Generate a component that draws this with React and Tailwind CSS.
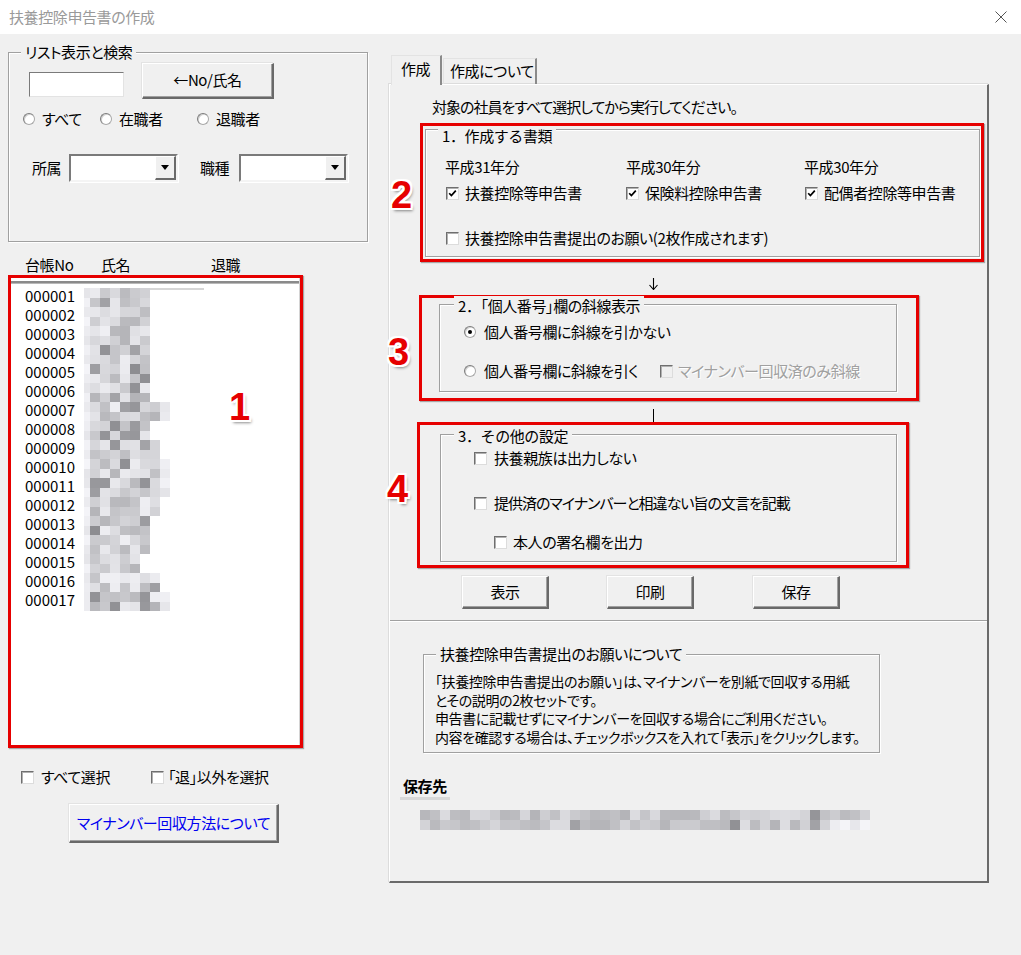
import React from 'react';

const NAME_ENDS = [150, 150, 150, 150, 150, 150, 170, 150, 160, 170, 170, 160, 150, 150, 140, 160, 170];

function rng(seed) {
  let s = seed;
  return () => {
    s = (s * 9301 + 49297) % 233280;
    return s / 233280;
  };
}

function shade(r, light, max = 240) {
  const t = r();
  let v = t < 0.1 ? 140 + Math.floor(r() * 25) : 180 + Math.floor(r() * (max - 180));
  if (light) v = 228 + Math.floor(r() * 18);
  return `rgb(${v},${v},${Math.min(255, v + 4)})`;
}

function NameBlur({ end, seed }) {
  const r = rng(seed);
  const cols = 1 + Math.round((end - 90) / 10);
  return (
    <div className="flex flex-col translate-y-[2px]">
      {[0, 1].map(row => (
        <div key={row} className={`flex ${row === 0 ? 'h-[10px]' : 'h-[9px]'}`}>
          {Array.from({ length: cols }).map((_, c) => (
            <div key={c} className={c === 0 ? 'w-[6px]' : 'w-[10px]'}
              style={{ backgroundColor: shade(r, c === 0 || c >= 8) }} />
          ))}
        </div>
      ))}
    </div>
  );
}

function PathBlur() {
  const r = rng(77);
  return (
    <div className="flex flex-col">
      {[0, 1].map(row => (
        <div key={row} className="flex h-[10px]">
          {Array.from({ length: 45 }).map((_, c) => (
            <div key={c} className="w-[10px]" style={{ backgroundColor: shade(r, row === 1 && c > 40, 222) }} />
          ))}
        </div>
      ))}
    </div>
  );
}

function Check({ checked, disabled }) {
  return (
    <span className={`relative inline-block shrink-0 w-[13px] h-[13px] border border-t-[#6f6f6f] border-l-[#6f6f6f] border-r-[#dcdcdc] border-b-[#dcdcdc] shadow-[inset_1px_1px_0_#b0b0b0] ${disabled ? 'bg-[#f0f0f0]' : 'bg-white'}`}>
      {checked && (
        <svg className="absolute left-[1px] top-[1px]" width="9" height="9" viewBox="0 0 9 9">
          <path d="M1.2 4.2 L3.4 6.6 L7.8 1.6" stroke="#000" strokeWidth="1.7" fill="none" />
        </svg>
      )}
    </span>
  );
}

function Radio({ checked }) {
  return (
    <span className="relative inline-block shrink-0 w-[12px] h-[12px] rounded-full bg-white border border-[#a8a8a8] border-t-[#7c7c7c] border-l-[#7c7c7c] shadow-[inset_1px_1px_0_#d0d0d0]">
      {checked && <span className="absolute left-[3px] top-[3px] w-[4px] h-[4px] rounded-full bg-black" />}
    </span>
  );
}

function WinBtn({ className, children }) {
  return (
    <div className={`flex items-center justify-center bg-[#f0f0f0] border-t border-l border-t-white border-l-white border-r-2 border-b-2 border-r-[#696969] border-b-[#696969] shadow-[-1px_-1px_0_#e3e3e3,inset_-1px_-1px_0_#a0a0a0] ${className}`}>
      {children}
    </div>
  );
}

function Combo() {
  return (
    <div className="flex w-[109px] h-[28px] bg-white border-2 border-t-[#7a7a7a] border-l-[#7a7a7a] border-r-[#f4f4f4] border-b-[#f4f4f4] shadow-[1px_1px_0_#fff]">
      <div className="flex-1" />
      <div className="w-[21px] h-full flex items-center justify-center bg-[#f0f0f0] border-t border-l border-t-white border-l-white border-r-2 border-b-2 border-r-[#6a6a6a] border-b-[#6a6a6a]">
        <svg width="8" height="5" viewBox="0 0 8 5"><path d="M0 0 H8 L4 5 Z" fill="#000" /></svg>
      </div>
    </div>
  );
}

function GroupBox({ label, labelPos, className, children }) {
  return (
    <div className={`relative border border-[#a0a0a0] shadow-[inset_1px_1px_0_#fff,1px_1px_0_#fff] ${className}`}>
      <span className={`absolute px-[4px] bg-[#f0f0f0] leading-[20px] whitespace-nowrap ${labelPos}`}>{label}</span>
      {children}
    </div>
  );
}

function Badge({ n, className }) {
  return (
    <span className={`absolute font-['Liberation_Sans',sans-serif] font-bold text-[38px] leading-none tracking-normal text-[#e60000] [text-shadow:2px_0_0_#fff,-2px_0_0_#fff,0_2px_0_#fff,0_-2px_0_#fff,2px_2px_0_#fff,-2px_-2px_0_#fff,2px_-2px_0_#fff,-2px_2px_0_#fff,2px_3px_3px_rgba(0,0,0,0.45)] ${className}`}>
      {n}
    </span>
  );
}

const redBox = 'relative border-[3px] border-[#e60000] shadow-[1px_1px_1px_rgba(0,0,0,0.3)]';

export default function App() {
  return (
    <div className="w-[1021px] h-[955px] bg-[#f0f0f0] text-black text-[15px] tracking-[-0.4px] font-['Noto_Sans_CJK_JP','Noto_Sans',sans-serif] [font-feature-settings:'palt'] overflow-hidden">
      {/* title bar */}
      <div className="h-[34px] bg-white flex items-center justify-between pl-[9px] pr-[14px]">
        <span className="text-[#9a9a9a] leading-[20px]">扶養控除申告書の作成</span>
        <svg width="12" height="12" viewBox="0 0 12 12">
          <path d="M0.5 0.5 L11.5 11.5 M11.5 0.5 L0.5 11.5" stroke="#555" strokeWidth="1" />
        </svg>
      </div>

      <div className="flex">
        {/* left column */}
        <div className="w-[389px] shrink-0 pl-[8px]">
          <GroupBox label="リスト表示と検索" labelPos="left-[12px] top-[-11px]" className="mt-[18px] w-[360px] h-[190px]">
            <div className="flex items-start pl-[20px]">
              <div className="mt-[19px] w-[95px] h-[25px] bg-white border border-t-[#7a7a7a] border-l-[#7a7a7a] border-r-[#e3e3e3] border-b-[#e3e3e3]" />
              <WinBtn className="mt-[10px] ml-[18px] w-[132px] h-[36px]">←No/氏名</WinBtn>
            </div>
            <div className="flex items-center h-[20px] mt-[10px] pl-[14px]">
              <div className="flex items-center gap-[7px] w-[77px]"><Radio /><span>すべて</span></div>
              <div className="flex items-center gap-[7px] w-[97px]"><Radio /><span>在職者</span></div>
              <div className="flex items-center gap-[7px]"><Radio /><span>退職者</span></div>
            </div>
            <div className="flex items-center mt-[25px] pl-[23px]">
              <span className="w-[37px]">所属</span>
              <Combo />
              <span className="w-[39px] ml-[22px]">職種</span>
              <Combo />
            </div>
          </GroupBox>

          <div className="flex h-[20px] leading-[20px] mt-[13px] pl-[17px]">
            <span className="w-[76px]">台帳No</span>
            <span className="w-[110px]">氏名</span>
            <span>退職</span>
          </div>

          <div className={`${redBox} w-[295px] h-[473px]`}>
            <div className="relative h-full bg-white border-r border-[#d4d4d4] pt-[3px]">
              <div className="h-[3px] border-t-2 border-b border-t-[#8a8a8a] border-b-[#b8b8b8]" />
              <div className="absolute left-[73px] top-[10px] w-[120px] h-[2px] bg-[#d6d6d6]" />
              <div className="pt-[2px]">
                {NAME_ENDS.map((end, i) => (
                  <div key={i} className="flex items-center h-[19px] pl-[14px]">
                    <span className="w-[59px] leading-[19px] tracking-normal">{String(i + 1).padStart(6, '0')}</span>
                    <NameBlur end={end} seed={i * 131 + 17} />
                  </div>
                ))}
              </div>
            </div>
            <Badge n="1" className="left-[218px] top-[110px]" />
          </div>

          <div className="flex items-center h-[20px] mt-[19px] pl-[13px]">
            <div className="flex items-center gap-[7px] w-[130px]"><Check /><span>すべて選択</span></div>
            <div className="flex items-center gap-[4px]"><Check /><span>「退」以外を選択</span></div>
          </div>

          <WinBtn className="mt-[17px] ml-[61px] w-[210px] h-[39px] text-[#0000f0]">マイナンバー回収方法について</WinBtn>
        </div>

        {/* right column */}
        <div className="w-[600px] shrink-0">
          <div className="flex items-end h-[29px] mt-[21px] pl-[2px]">
            <div className="relative z-10 h-[30px] w-[51px] -mb-[1px] flex items-center pb-[2px] pl-[9px] bg-[#f0f0f0] border-t border-l border-t-[#e3e3e3] border-l-[#e3e3e3] border-r-2 border-r-[#8a8a8a]">作成</div>
            <div className="h-[26px] w-[94px] ml-[1px] flex items-center pl-[6px] whitespace-nowrap border-t border-l border-t-[#e3e3e3] border-l-[#e3e3e3] border-r-2 border-r-[#8a8a8a]">作成について</div>
          </div>

          <div className="h-[799px] border-t border-l border-t-white border-l-white border-r-2 border-b-2 border-r-[#6a6a6a] border-b-[#6a6a6a] shadow-[-1px_-1px_0_#dcdcdc]">
            <div className="mt-[12px] h-[20px] leading-[20px] pl-[42px] tracking-[-1px]">対象の社員をすべて選択してから実行してください。</div>

            <div className={`${redBox} mt-[6px] ml-[30px] w-[564px] h-[139px]`}>
              <GroupBox label={<span className="[font-feature-settings:normal]">1．作成する書類</span>} labelPos="left-[12px] top-[-4px]" className="mt-[3px] ml-[2px] w-[555px] h-[128px]">
                <div className="flex h-[20px] leading-[20px] mt-[27px] pl-[19px]">
                  <span className="w-[181px]">平成31年分</span>
                  <span className="w-[178px]">平成30年分</span>
                  <span>平成30年分</span>
                </div>
                <div className="flex items-center h-[20px] mt-[6px] pl-[20px]">
                  <div className="flex items-center gap-[6px] w-[180px]"><Check checked /><span>扶養控除等申告書</span></div>
                  <div className="flex items-center gap-[6px] w-[179px]"><Check checked /><span>保険料控除申告書</span></div>
                  <div className="flex items-center gap-[6px]"><Check checked /><span>配偶者控除等申告書</span></div>
                </div>
                <div className="flex items-center gap-[6px] h-[20px] mt-[25px] pl-[20px]">
                  <Check /><span>扶養控除申告書提出のお願い(2枚作成されます)</span>
                </div>
              </GroupBox>
              <Badge n="2" className="left-[-32px] top-[50px]" />
            </div>

            <svg className="mt-[16px] ml-[258px] block" width="11" height="12" viewBox="0 0 11 12">
              <path d="M5.5 0 V11 M1.5 7 L5.5 11.5 L9.5 7" stroke="#000" strokeWidth="1.1" fill="none" />
            </svg>

            <div className={`${redBox} mt-[5px] ml-[29px] w-[500px] h-[106px]`}>
              <GroupBox label={<><span className="[font-feature-settings:normal]">2．</span><span>「個人番号」欄の斜線表示</span></>} labelPos="left-[14px] top-[-9px]" className="mt-[6px] ml-[17px] w-[458px] h-[88px]">
                <div className="flex items-center gap-[8px] h-[20px] mt-[17px] pl-[24px]">
                  <Radio checked /><span>個人番号欄に斜線を引かない</span>
                </div>
                <div className="flex items-center h-[20px] mt-[19px] pl-[24px]">
                  <div className="flex items-center gap-[8px] w-[196px]"><Radio /><span>個人番号欄に斜線を引く</span></div>
                  <div className="flex items-center gap-[5px] text-[#a0a0a0] [text-shadow:1px_1px_0_#fff]"><Check disabled /><span>マイナンバー回収済のみ斜線</span></div>
                </div>
              </GroupBox>
              <Badge n="3" className="left-[-34px] top-[35px]" />
            </div>

            <div className="mt-[8px] ml-[263px] w-px h-[13px] bg-black" />

            <div className={`${redBox} ml-[27px] w-[492px] h-[146px]`}>
              <GroupBox label={<span className="[font-feature-settings:normal]">3．その他の設定</span>} labelPos="left-[13px] top-[-9px]" className="mt-[9px] ml-[20px] w-[457px] h-[128px]">
                <div className="flex items-center gap-[7px] h-[20px] mt-[13px] pl-[33px]">
                  <Check /><span>扶養親族は出力しない</span>
                </div>
                <div className="flex items-center gap-[7px] h-[20px] mt-[25px] pl-[33px]">
                  <Check /><span className="tracking-[-1px]">提供済のマイナンバーと相違ない旨の文言を記載</span>
                </div>
                <div className="flex items-center gap-[6px] h-[20px] mt-[19px] pl-[53px]">
                  <Check /><span>本人の署名欄を出力</span>
                </div>
              </GroupBox>
              <Badge n="4" className="left-[-33px] top-[45px]" />
            </div>

            <div className="flex mt-[8px] pl-[72px] h-[33px]">
              <WinBtn className="w-[87px] h-[33px]">表示</WinBtn>
              <WinBtn className="ml-[58px] w-[87px] h-[33px]">印刷</WinBtn>
              <WinBtn className="ml-[59px] w-[87px] h-[33px]">保存</WinBtn>
            </div>

            <div className="mt-[11px] h-[2px] border-t border-b border-t-[#a0a0a0] border-b-white" />

            <GroupBox label="扶養控除申告書提出のお願いについて" labelPos="left-[12px] top-[-11px]" className="mt-[32px] ml-[33px] w-[457px] h-[99px]">
              <div className="pt-[17px] pl-[11px] text-[14px] leading-[18.7px] whitespace-nowrap">
                <div>「扶養控除申告書提出のお願い」は、マイナンバーを別紙で回収する用紙</div>
                <div>とその説明の2枚セットです。</div>
                <div>申告書に記載せずにマイナンバーを回収する場合にご利用ください。</div>
                <div>内容を確認する場合は、チェックボックスを入れて「表示」をクリックします。</div>
              </div>
            </GroupBox>

            <div className="mt-[23px] pl-[13px] h-[20px] leading-[20px] font-bold">保存先</div>
            <div className="mt-[1px] ml-[10px] w-[50px] h-[3px] bg-[#d8d8d8]" />
            <div className="mt-[10px] ml-[30px]">
              <PathBlur />
            </div>
          </div>
        </div>
      </div>
    </div>
  );
}
